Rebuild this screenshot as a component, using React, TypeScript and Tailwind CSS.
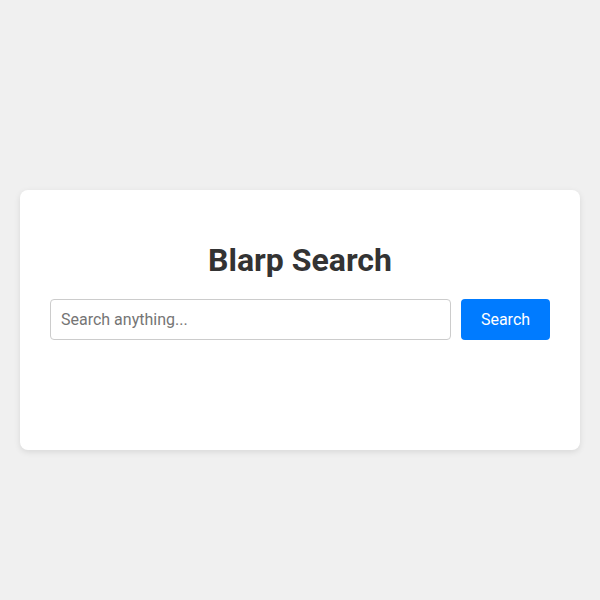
export default function App() {
  return (
    <div className="min-h-[600px] bg-[#f0f0f0] px-5 pt-[190px]" style={{ fontFamily: 'Roboto, "Liberation Sans", sans-serif' }}>
      <div className="h-[260px] rounded-lg bg-white px-[30px] pt-[30px] shadow-[0_2px_6px_rgba(0,0,0,0.1)]">
        <h1 className="mt-[22px] mb-[20px] text-center text-[32px] font-bold leading-[37px] text-[#333]">Blarp Search</h1>
        <div className="flex gap-[10px]">
          <input
            type="text"
            placeholder="Search anything..."
            className="h-[41px] flex-1 rounded border border-[#ccc] px-[10px] text-base text-[#333] outline-none placeholder:text-[#757575]"
          />
          <button className="h-[41px] w-[89px] rounded bg-[#007bff] text-base text-white">Search</button>
        </div>
      </div>
    </div>
  );
}
